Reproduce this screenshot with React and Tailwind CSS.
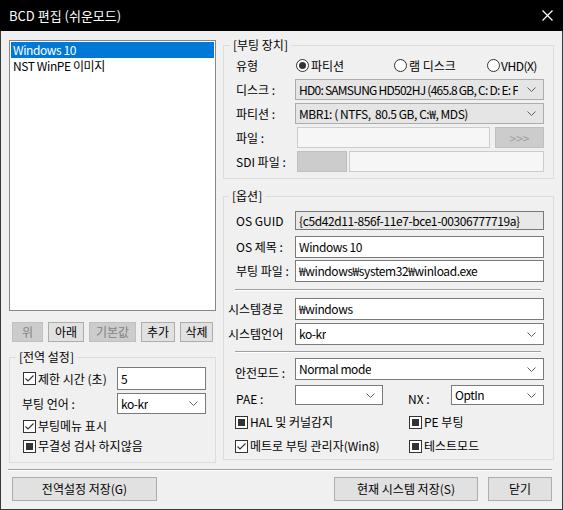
import React from "react";

const Chevron = () => (
  <svg width="9" height="5" viewBox="0 0 9 5" className="shrink-0">
    <path d="M0.5 0.5 L4.5 4.5 L8.5 0.5" stroke="#606060" strokeWidth="1" fill="none" />
  </svg>
);

function Check({ state }) {
  return (
    <div className="w-[13px] h-[13px] border border-[#333333] bg-white flex items-center justify-center shrink-0">
      {state === "checked" && (
        <svg width="11" height="11" viewBox="0 0 11 11">
          <path d="M1.5 5.5 L4 8 L9.5 2.5" stroke="#333333" strokeWidth="1.2" fill="none" />
        </svg>
      )}
      {state === "mixed" && <div className="w-[7px] h-[7px] bg-[#333333]" />}
    </div>
  );
}

function Radio({ checked }) {
  return (
    <div className="w-[13px] h-[13px] rounded-full border border-[#333333] bg-white flex items-center justify-center shrink-0">
      {checked && <div className="w-[7px] h-[7px] rounded-full bg-[#333333]" />}
    </div>
  );
}

function Combo({ value, gray, className = "", textClass = "tracking-[-0.45px]" }) {
  return (
    <div
      className={
        "h-full min-w-0 flex items-center justify-between gap-[2px] pl-[3px] pr-[7px] border overflow-hidden whitespace-nowrap " +
        (gray ? "bg-[#e5e5e5] border-[#acacac] " : "bg-white border-[#7a7a7a] ") +
        className
      }
    >
      <span className={"min-w-0 overflow-hidden " + textClass}>{value}</span>
      <Chevron />
    </div>
  );
}

function Field({ value, className = "" }) {
  return (
    <div className={"h-full min-w-0 flex items-center pl-[3px] border border-[#7a7a7a] bg-white whitespace-nowrap overflow-hidden tracking-[-0.4px] " + className}>
      {value}
    </div>
  );
}

function Btn({ children, disabled, className = "" }) {
  return (
    <div
      className={
        "h-full flex items-center justify-center border " +
        (disabled ? "bg-[#cccccc] border-[#bfbfbf] text-[#838383] " : "bg-[#e1e1e1] border-[#adadad] ") +
        className
      }
    >
      {children}
    </div>
  );
}

const Sep = ({ className = "" }) => (
  <div className={"border-t border-[#a0a0a0] border-b border-b-white " + className} />
);

export default function App() {
  return (
    <div className="w-[563px] h-[510px] flex flex-col bg-[#f0f0f0] text-black text-[12px] leading-[16px] font-['Noto_Sans_CJK_KR','Noto_Sans',sans-serif]">
      {/* 제목 표시줄 */}
      <div className="h-[31px] shrink-0 bg-black text-white flex items-center justify-between pl-[9px] pr-[10px]">
        <span className="text-[13px]">BCD 편집 (쉬운모드)</span>
        <svg width="11" height="11" viewBox="0 0 11 11">
          <path d="M0.5 0.5 L10.5 10.5 M10.5 0.5 L0.5 10.5" stroke="white" strokeWidth="1.2" />
        </svg>
      </div>

      <div className="flex-1 flex flex-col border-x border-b border-[#3a3a3a]">
        <div className="flex items-start pl-[8px]">
          {/* 왼쪽 */}
          <div className="w-[207px] mt-[9px] flex flex-col">
            <div className="h-[271px] border border-[#828790] bg-white p-[1px] tracking-[-0.4px]">
              <div className="h-[16px] bg-[#0078d7] text-white pl-[2px] flex items-center">Windows 10</div>
              <div className="h-[16px] pl-[2px] flex items-center">NST WinPE 이미지</div>
            </div>
            <div className="h-[20px] mt-[11px] ml-[3px] flex gap-[5px]">
              <Btn disabled className="w-[31px]">위</Btn>
              <Btn className="w-[36px]">아래</Btn>
              <Btn disabled className="w-[47px]">기본값</Btn>
              <Btn className="w-[34px]">추가</Btn>
              <Btn className="w-[33px]">삭제</Btn>
            </div>
            <fieldset className="mt-[7px] h-[114px] min-w-0 border border-[#dcdcdc]">
              <legend className="ml-[6px] px-[3px]">[전역 설정]</legend>
              <div className="pl-[13px] pr-[9px] pt-[2px] flex flex-col">
                <div className="h-[23px] flex items-center justify-between">
                  <div className="flex items-center gap-[2px]">
                    <Check state="checked" />
                    <span>제한 시간 (초)</span>
                  </div>
                  <Field value="5" className="w-[89px]" />
                </div>
                <div className="h-[21px] mt-[3px] flex items-center justify-between">
                  <span className="-ml-[1px]">부팅 언어 :</span>
                  <Combo value="ko-kr" className="w-[89px]" />
                </div>
                <div className="h-[20px] mt-[2px] flex items-center gap-[2px]">
                  <Check state="checked" />
                  <span>부팅메뉴 표시</span>
                </div>
                <div className="h-[20px] flex items-center gap-[2px]">
                  <Check state="mixed" />
                  <span>무결성 검사 하지않음</span>
                </div>
              </div>
            </fieldset>
          </div>

          {/* 오른쪽 */}
          <div className="w-[331px] ml-[7px] mt-[6px] flex flex-col">
            <fieldset className="h-[142px] min-w-0 border border-[#dcdcdc]">
              <legend className="ml-[6px] px-[3px]">[부팅 장치]</legend>
              <div className="pl-[12px] pr-[9px] pt-[2px] flex flex-col gap-[3px]">
                <div className="h-[21px] flex items-center">
                  <span className="w-[59px] shrink-0">유형</span>
                  <div className="w-[98px] ml-[1px] flex items-center gap-[2px]">
                    <Radio checked />
                    <span>파티션</span>
                  </div>
                  <div className="w-[93px] flex items-center gap-[2px]">
                    <Radio />
                    <span>램 디스크</span>
                  </div>
                  <div className="flex items-center gap-[1px]">
                    <Radio />
                    <span className="tracking-[-0.5px]">VHD(X)</span>
                  </div>
                </div>
                <div className="h-[21px] flex items-center">
                  <span className="w-[59px] shrink-0">디스크 :</span>
                  <Combo
                    gray
                    value="HD0: SAMSUNG HD502HJ (465.8 GB, C: D: E: F"
                    className="flex-1"
                    textClass="tracking-[-0.75px]"
                  />
                </div>
                <div className="h-[21px] flex items-center">
                  <span className="w-[59px] shrink-0">파티션 :</span>
                  <Combo gray value="MBR1: ( NTFS,  80.5 GB, C:₩, MDS)" className="flex-1 whitespace-pre" />
                </div>
                <div className="h-[21px] flex items-center">
                  <span className="w-[59px] shrink-0">파일 :</span>
                  <div className="h-full w-[193px] ml-[2px] border border-[#cccccc] bg-[#f6f6f6]" />
                  <Btn disabled className="w-[49px] ml-[5px] text-[#a0a0a0]">&gt;&gt;&gt;</Btn>
                </div>
                <div className="h-[21px] flex items-center">
                  <span className="w-[59px] shrink-0">SDI 파일 :</span>
                  <div className="h-full w-[50px] ml-[2px] border border-[#bfbfbf] bg-[#cccccc]" />
                  <div className="h-full flex-1 min-w-0 ml-[2px] border border-[#cccccc] bg-[#f6f6f6]" />
                </div>
              </div>
            </fieldset>

            <fieldset className="mt-[9px] h-[272px] min-w-0 border border-[#dcdcdc]">
              <legend className="ml-[5px] px-[3px]">[옵션]</legend>
              <div className="pr-[9px] flex flex-col">
                <div className="h-[19px] mt-[7px] pl-[12px] flex items-center">
                  <span className="w-[59px] shrink-0">OS GUID</span>
                  <div className="h-full flex-1 min-w-0 flex items-center pl-[3px] border border-[#7a7a7a] bg-[#e8e8e8] whitespace-nowrap overflow-hidden tracking-[-0.4px]">
                    {"{c5d42d11-856f-11e7-bce1-00306777719a}"}
                  </div>
                </div>
                <div className="h-[22px] mt-[6px] pl-[12px] flex items-center">
                  <span className="w-[59px] shrink-0">OS 제목 :</span>
                  <Field value="Windows 10" className="flex-1" />
                </div>
                <div className="h-[22px] mt-[2px] pl-[12px] flex items-center">
                  <span className="w-[59px] shrink-0">부팅 파일 :</span>
                  <Field value="₩windows₩system32₩winload.exe" className="flex-1" />
                </div>
                <Sep className="mt-[7px] ml-[11px] mr-[3px]" />
                <div className="h-[22px] mt-[7px] pl-[4px] flex items-center">
                  <span className="w-[67px] shrink-0">시스템경로</span>
                  <Field value="₩windows" className="flex-1" />
                </div>
                <div className="h-[22px] mt-[3px] pl-[4px] flex items-center">
                  <span className="w-[67px] shrink-0">시스템언어</span>
                  <Combo value="ko-kr" className="flex-1" />
                </div>
                <Sep className="mt-[6px] ml-[11px] mr-[3px]" />
                <div className="h-[22px] mt-[5px] pl-[11px] flex items-center">
                  <span className="w-[60px] shrink-0 mt-[8px]">안전모드 :</span>
                  <Combo value="Normal mode" className="flex-1" />
                </div>
                <div className="h-[20px] mt-[5px] pl-[12px] flex items-center">
                  <span className="w-[59px] shrink-0 mt-[8px]">PAE :</span>
                  <Combo value="" className="w-[88px]" />
                  <span className="w-[43px] ml-[25px] shrink-0 mt-[8px]">NX :</span>
                  <Combo value="OptIn" className="flex-1" />
                </div>
                <div className="h-[20px] mt-[7px] pl-[11px] flex items-center">
                  <div className="w-[174px] flex items-center gap-[2px]">
                    <Check state="mixed" />
                    <span>HAL 및 커널감지</span>
                  </div>
                  <div className="flex items-center gap-[2px]">
                    <Check state="mixed" />
                    <span>PE 부팅</span>
                  </div>
                </div>
                <div className="h-[20px] mt-[4px] pl-[11px] flex items-center">
                  <div className="w-[174px] flex items-center gap-[2px]">
                    <Check state="checked" />
                    <span>메트로 부팅 관리자(Win8)</span>
                  </div>
                  <div className="flex items-center gap-[2px]">
                    <Check state="mixed" />
                    <span>테스트모드</span>
                  </div>
                </div>
              </div>
            </fieldset>
          </div>
        </div>

        <Sep className="mt-[6px] ml-[7px] mr-[10px]" />
        <div className="h-[24px] mt-[6px] flex">
          <Btn className="w-[145px] ml-[11px]">전역설정 저장(G)</Btn>
          <Btn className="w-[144px] ml-auto">현재 시스템 저장(S)</Btn>
          <Btn className="w-[64px] ml-[10px] mr-[10px]">닫기</Btn>
        </div>
      </div>
    </div>
  );
}
